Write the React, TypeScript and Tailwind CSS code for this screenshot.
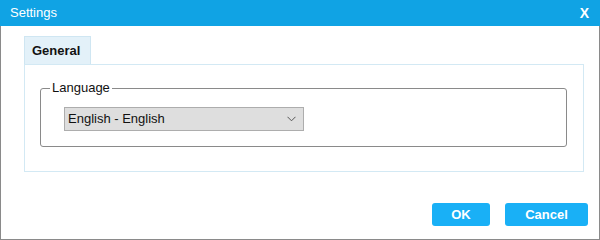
import React from "react";

export default function App() {
  return (
    <div
      className="w-[600px] h-[240px] flex flex-col bg-white"
      style={{ fontFamily: '"Liberation Sans", Arial, sans-serif' }}
    >
      <div className="h-[26px] bg-[#10a3e4] flex items-center justify-between pl-[10px] pr-[11px] text-white">
        <span className="text-[13px]">Settings</span>
        <span className="text-[14px] font-bold leading-none">X</span>
      </div>
      <div className="flex-1 flex flex-col border-l border-r border-b border-[#8a8a8a] pl-[23px] pr-[14px] pt-[10px]">
        <div className="w-[560px] flex flex-col">
          <div className="flex">
            <div className="h-[28px] w-[67px] bg-[#e3f1f9] border border-b-0 border-[#cfe6f2] flex items-center pl-[7px] text-[13px] font-bold text-[#111]">
              General
            </div>
          </div>
          <div className="h-[108px] border border-[#d3e9f4] pl-[15px] pr-[16px] pt-[15px]">
            <fieldset className="border border-[#8a8a8a] rounded-[3px] h-[67px] pl-[9px]">
              <legend className="px-[2px] text-[13px] text-[#111] leading-[16px]">
                Language
              </legend>
              <div className="mt-[11px] ml-[14px] w-[240px] h-[24px] bg-[#dedede] border border-[#adadad] flex items-center justify-between pl-[3px] pr-[7px] text-[13px] text-[#111]">
                <span>English - English</span>
                <svg width="9" height="6" viewBox="0 0 9 6">
                  <path d="M0.5 0.8 L4.5 4.8 L8.5 0.8" fill="none" stroke="#555" strokeWidth="1" />
                </svg>
              </div>
            </fieldset>
          </div>
        </div>
        <div className="flex justify-end gap-[15px] mt-[31px] mr-[-3px]">
          <button className="w-[58px] h-[23px] bg-[#19b0f6] rounded-[3px] text-white font-bold text-[13px]">
            OK
          </button>
          <button className="w-[83px] h-[23px] bg-[#19b0f6] rounded-[3px] text-white font-bold text-[13px]">
            Cancel
          </button>
        </div>
      </div>
    </div>
  );
}
